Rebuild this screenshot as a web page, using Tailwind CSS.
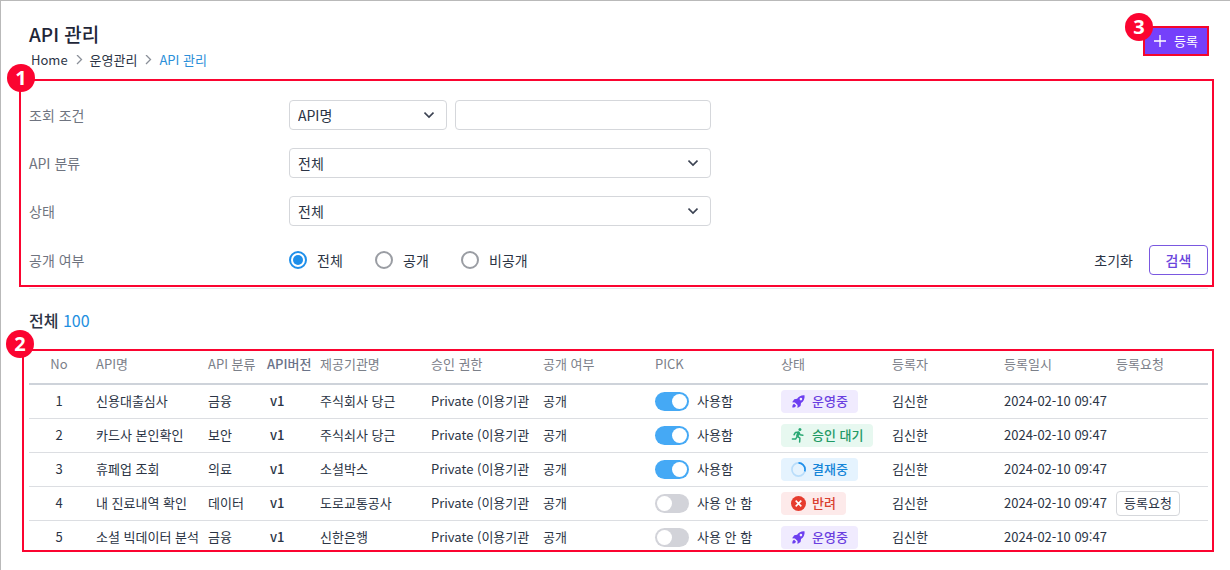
<!DOCTYPE html>
<html lang="ko">
<head>
    <meta charset="UTF-8">
    <meta name="viewport" content="width=device-width, initial-scale=1.0">
    <title>API 관리</title>
    <script src="https://cdn.jsdelivr.net/npm/@tailwindcss/browser@4"></script>
</head>
<body class="min-h-screen overflow-hidden border-t border-l border-[#b9b9b9] bg-white pl-7 pr-[22px] pt-[19px] font-['Noto_Sans_CJK_KR',sans-serif] text-[14px] leading-5 text-[#2b3445]">

    <!-- 상단 제목 -->
    <header class="flex items-start justify-between">
        <div>
            <h1 class="text-[19px] leading-7 font-medium text-[#1f2638]">API 관리</h1>
            <nav class="mt-0.5 flex items-center pl-0.5 text-[13px]">
                <a href="#">Home</a>
                <svg class="mx-1.5 size-2.5" viewBox="0 0 10 10" fill="none" stroke="#8a8f98" stroke-width="1.3"><path d="M3 0l4.500 4.500L3 9"/></svg>
                <a href="#">운영관리</a>
                <svg class="mx-1.5 size-2.5" viewBox="0 0 10 10" fill="none" stroke="#8a8f98" stroke-width="1.3"><path d="M3 0l4.500 4.500L3 9"/></svg>
                <a href="#" class="text-[#2b8fd9]">API 관리</a>
            </nav>
        </div>
        <div class="relative mt-1.5 -mr-px">
            <button type="button" class="flex h-[30px] w-[66px] items-center justify-center gap-2 border-2 border-[#f5062c] bg-[#7540fb] text-[13px] text-white">
                <svg class="size-3" viewBox="0 0 12 12" fill="none" stroke="currentColor" stroke-width="1.3"><path d="M6 0v12M0 6h12"/></svg>
                등록
            </button>
            <span class="absolute -top-[13px] -left-[18px] flex size-7 items-center justify-center rounded-full bg-[#fb0430] font-['Open_Sans',sans-serif] text-[20px] font-bold text-white">3</span>
        </div>
    </header>

    <!-- 검색 조건 -->
    <form class="relative mt-[30px] border-b border-[#e6e8ec] pb-[13px]">
        <div class="grid grid-cols-[260px_minmax(0,422px)] gap-y-[18px]">
            <label for="keyword" class="self-center text-[#6f7480]">조회 조건</label>
            <div class="flex gap-2">
                <div class="relative w-[158px]">
                    <select aria-label="조회 조건 구분" class="h-[30px] w-full appearance-none rounded border border-[#d5d7db] bg-white px-2">
                        <option>API명</option>
                    </select>
                    <svg class="pointer-events-none absolute top-2.5 right-[13px] size-2.5" viewBox="0 0 10 10" fill="none" stroke="#3b4252" stroke-width="1.6"><path d="M.5 2.5L5 7l4.500-4.500"/></svg>
                </div>
                <input type="text" id="keyword" class="h-[30px] min-w-0 flex-1 rounded border border-[#d5d7db] px-2">
            </div>

            <label for="category" class="self-center text-[#6f7480]">API 분류</label>
            <div class="relative">
                <select id="category" class="h-[30px] w-full appearance-none rounded border border-[#d5d7db] bg-white px-2">
                    <option>전체</option>
                </select>
                <svg class="pointer-events-none absolute top-2.5 right-[13px] size-2.5" viewBox="0 0 10 10" fill="none" stroke="#3b4252" stroke-width="1.6"><path d="M.5 2.5L5 7l4.500-4.500"/></svg>
            </div>

            <label for="status" class="self-center text-[#6f7480]">상태</label>
            <div class="relative">
                <select id="status" class="h-[30px] w-full appearance-none rounded border border-[#d5d7db] bg-white px-2">
                    <option>전체</option>
                </select>
                <svg class="pointer-events-none absolute top-2.5 right-[13px] size-2.5" viewBox="0 0 10 10" fill="none" stroke="#3b4252" stroke-width="1.6"><path d="M.5 2.5L5 7l4.500-4.500"/></svg>
            </div>
        </div>

        <div class="mt-[19px] flex items-center">
            <span id="open-label" class="w-[260px] text-[#6f7480]">공개 여부</span>
            <div role="radiogroup" aria-labelledby="open-label" class="flex flex-1">
                <label class="flex w-[86px] items-center gap-2.5">
                    <input type="radio" name="open" checked class="size-[18px] appearance-none rounded-full border-2 border-[#9a9da3] p-0.5 checked:border-[#1e8fea] checked:bg-[#1e8fea] checked:bg-clip-content">
                    전체
                </label>
                <label class="flex w-[86px] items-center gap-2.5">
                    <input type="radio" name="open" class="size-[18px] appearance-none rounded-full border-2 border-[#9a9da3] p-0.5 checked:border-[#1e8fea] checked:bg-[#1e8fea] checked:bg-clip-content">
                    공개
                </label>
                <label class="flex items-center gap-2.5">
                    <input type="radio" name="open" class="size-[18px] appearance-none rounded-full border-2 border-[#9a9da3] p-0.5 checked:border-[#1e8fea] checked:bg-[#1e8fea] checked:bg-clip-content">
                    비공개
                </label>
            </div>
            <button type="reset" class="mr-4">초기화</button>
            <button type="submit" class="h-[30px] w-[59px] rounded border border-[#7a58e0] font-medium text-[#6a45dc]">검색</button>
        </div>

        <!-- 영역 1 표시 -->
        <div class="pointer-events-none absolute -top-[21px] -right-[6px] bottom-px -left-[10px] border-2 border-[#fb0430]">
            <span class="absolute -top-[17px] -left-[14px] flex size-7 items-center justify-center rounded-full bg-[#fb0430] font-['Open_Sans',sans-serif] text-[20px] font-bold text-white">1</span>
        </div>
    </form>

    <!-- 목록 -->
    <p class="mt-[19px] text-[16px] leading-6 font-medium">전체 <span class="font-normal text-[#1e8fe0]">100</span></p>

    <div class="relative mt-3">
        <table class="w-full table-fixed border-collapse text-[13px] whitespace-nowrap">
            <colgroup>
                <col class="w-[60px]">
                <col class="w-[112px]">
                <col class="w-[59px]">
                <col class="w-[53px]">
                <col class="w-[111px]">
                <col class="w-[112px]">
                <col class="w-[112px]">
                <col class="w-[126px]">
                <col class="w-[111px]">
                <col class="w-[112px]">
                <col class="w-[112px]">
                <col class="w-[99px]">
            </colgroup>
            <thead>
                <tr class="h-10 border-b-2 border-[#ced3da] text-left text-[#7b8089]">
                    <th class="text-center font-normal">No</th>
                    <th class="pl-[7px] font-normal">API명</th>
                    <th class="pl-[7px] font-normal">API 분류</th>
                    <th class="pl-[7px] font-medium text-[#6a7389]">API버전</th>
                    <th class="pl-[7px] font-normal">제공기관명</th>
                    <th class="pl-[7px] font-normal">승인 권한</th>
                    <th class="pl-[7px] font-normal">공개 여부</th>
                    <th class="pl-[7px] font-normal">PICK</th>
                    <th class="pl-[7px] font-normal">상태</th>
                    <th class="pl-[7px] font-normal">등록자</th>
                    <th class="pl-[7px] font-normal">등록일시</th>
                    <th class="pl-[7px] font-normal">등록요청</th>
                </tr>
            </thead>
            <tbody id="api-list"></tbody>
        </table>

        <!-- 영역 2 표시 -->
        <div class="pointer-events-none absolute top-[5px] -right-[6px] bottom-0.5 -left-[7px] border-2 border-[#fb0430]">
            <span class="absolute -top-[21px] -left-[18px] flex size-7 items-center justify-center rounded-full bg-[#fb0430] font-['Open_Sans',sans-serif] text-[20px] font-bold text-white">2</span>
        </div>
    </div>

    <script>
        const statusInfo = {
            run: {
                label: '운영중',
                style: 'bg-[#f0ebfe] text-[#6a3fe0]',
                icon: '<path fill="#6d3ff0" fill-rule="evenodd" d="M14.500 1.500C11 1.200 8.500 2.500 6.500 5.100L3.500 5.500 1.200 8.800l3 .2 2.800 2.800-.1 3 3.300-2.100.5-3C13.400 8 14.800 5 14.500 1.500zM10.600 4a1.400 1.400 0 110 2.800 1.400 1.400 0 010-2.800zM3.400 10.300c-1.500.5-2 2-2 4 2 0 3.500-.4 4-1.900z"/>'
            },
            wait: {
                label: '승인 대기',
                style: 'bg-[#e7f8f0] text-[#1f9a66]',
                icon: '<circle cx="9.500" cy="1.700" r="1.600" fill="#2aa874"/><path fill="none" stroke="#2aa874" stroke-linecap="round" stroke-linejoin="round" stroke-width="1.600" d="M3.300 7.200l1.500-2.500L8.300 4.200l1.300 2.900 3 .7M8 4.800L6.500 8.600l3 2.300-.3 4M6.500 9.300l-1.600 2.500H1.500"/><path fill="#2aa874" d="M6.500 4.300l2.800.3-1.300 5-2.500-.8z"/>'
            },
            sign: {
                label: '결재중',
                style: 'bg-[#e5f3fe] text-[#1585d8]',
                icon: '<circle cx="8" cy="8" r="7" fill="none" stroke="#b9ddfa" stroke-width="1.800"/><path fill="none" stroke="#1e8fea" stroke-width="1.800" d="M8 1a7 7 0 017 7 7 7 0 01-.4 2"/>'
            },
            reject: {
                label: '반려',
                style: 'bg-[#fdeaea] text-[#d9402f]',
                icon: '<circle cx="8" cy="8" r="8" fill="#e63c2e"/><path fill="none" stroke="#fff" stroke-width="1.700" d="M5 5l6 6M11 5l-6 6"/>'
            }
        };

        const apis = [
            { no: 1, name: '신용대출심사', type: '금융', org: '주식회사 당근', pick: true, status: 'run' },
            { no: 2, name: '카드사 본인확인', type: '보안', org: '주식쇠사 당근', pick: true, status: 'wait' },
            { no: 3, name: '휴페업 조회', type: '의료', org: '소셜박스', pick: true, status: 'sign' },
            { no: 4, name: '내 진료내역 확인', type: '데이터', org: '도로교통공사', pick: false, status: 'reject', request: true },
            { no: 5, name: '소셜 빅데이터 분석', type: '금융', org: '신한은행', pick: false, status: 'run' }
        ];

        document.getElementById('api-list').innerHTML = apis.map(api => {
            const status = statusInfo[api.status];
            return `
                <tr class="h-[34px] border-b border-[#dcdee2] last:border-b-0">
                    <td class="text-center">${api.no}</td>
                    <td class="pl-[7px]">${api.name}</td>
                    <td class="pl-[7px]">${api.type}</td>
                    <td class="pl-2.5 font-medium">v1</td>
                    <td class="pl-[7px]">${api.org}</td>
                    <td class="pl-[7px]">Private (이용기관</td>
                    <td class="pl-[7px]">공개</td>
                    <td class="pl-[7px]">
                        <label class="flex items-center gap-2">
                            <input type="checkbox" role="switch" ${api.pick ? 'checked' : ''} class="h-[19px] w-[34px] appearance-none rounded-full bg-[#d2d3d9] p-0.5 before:block before:size-[15px] before:rounded-full before:bg-white checked:bg-[#45a9f5] checked:before:ml-[15px]">
                            ${api.pick ? '사용함' : '사용 안 함'}
                        </label>
                    </td>
                    <td class="pl-[7px]">
                        <span class="flex h-[23px] w-fit items-center gap-1.5 rounded px-2.5 font-medium ${status.style}">
                            <svg class="size-[15px]" viewBox="0 0 16 16">${status.icon}</svg>
                            ${status.label}
                        </span>
                    </td>
                    <td class="pl-[7px]">김신한</td>
                    <td class="pl-[7px]">2024-02-10 09:47</td>
                    <td class="pl-[7px]">${api.request ? '<button type="button" class="block h-[25px] w-16 rounded border border-[#d5d7db] text-[13px]">등록요청</button>' : ''}</td>
                </tr>
            `;
        }).join('');
    </script>
</body>
</html>
